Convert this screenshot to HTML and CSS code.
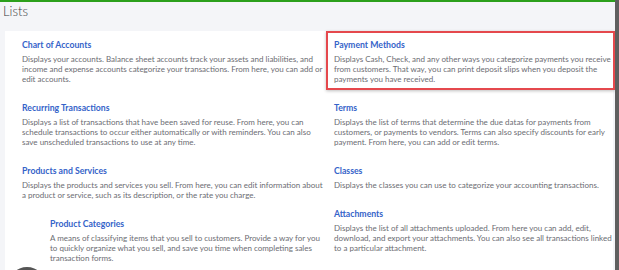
FILE: index.html
```
<!DOCTYPE html>
<html>
  <head>
    <title>Lists</title>
    <link rel="stylesheet" href="styles.css">
  </head>
  <body>
    <div class="window">
      <div class="page">
        <h1 class="page-title">Lists</h1>
        <div class="lists-card">
          <div class="list-column left-column">
            <div class="list-item">
              <a class="item-title" href="#">Chart of Accounts</a>
              <p class="item-text">Displays your accounts. Balance sheet accounts track your assets and liabilities, and income and expense accounts categorize your transactions. From here, you can add or edit accounts.</p>
            </div>
            <div class="list-item">
              <a class="item-title" href="#">Recurring Transactions</a>
              <p class="item-text">Displays a list of transactions that have been saved for reuse. From here, you can schedule transactions to occur either automatically or with reminders. You can also save unscheduled transactions to use at any time.</p>
            </div>
            <div class="list-item">
              <a class="item-title" href="#">Products and Services</a>
              <p class="item-text">Displays the products and services you sell. From here, you can edit information about a product or service, such as its description, or the rate you charge.</p>
            </div>
            <div class="list-item sub-item">
              <a class="item-title" href="#">Product Categories</a>
              <p class="item-text">A means of classifying items that you sell to customers. Provide a way for you to quickly organize what you sell, and save you time when completing sales transaction forms.</p>
            </div>
          </div>
          <div class="list-column right-column">
            <div class="list-item highlighted">
              <a class="item-title" href="#">Payment Methods</a>
              <p class="item-text">Displays Cash, Check, and any other ways you categorize payments you receive from customers. That way, you can print deposit slips when you deposit the payments you have received.</p>
            </div>
            <div class="list-item">
              <a class="item-title" href="#">Terms</a>
              <p class="item-text">Displays the list of terms that determine the due datas for payments from customers, or payments to vendors. Terms can also specify discounts for early payment. From here, you can add or edit terms.</p>
            </div>
            <div class="list-item">
              <a class="item-title" href="#">Classes</a>
              <p class="item-text">Displays the classes you can use to categorize your accounting transactions.</p>
            </div>
            <div class="list-item">
              <a class="item-title" href="#">Attachments</a>
              <p class="item-text">Displays the list of all attachments uploaded. From here you can add, edit, download, and export your attachments. You can also see all transactions linked to a particular attachment.</p>
            </div>
          </div>
        </div>
        <div class="help-button"></div>
      </div>
      <div class="scrollbar"></div>
    </div>
  </body>
</html>
```

FILE: styles.css
```
body {
  margin: 0;
  background-color: #f4f5f8;
  font-family: "Lato", "Liberation Sans", sans-serif;
  overflow: hidden;
}

.window {
  display: flex;
  height: 270px;
}

.page {
  position: relative;
  flex: 1;
  border-top: 2px solid #2ca01c;
  overflow: hidden;
}

.scrollbar {
  width: 4px;
  background-color: #5f5f5f;
}

.page-title {
  margin: 0;
  padding: 1px 0 0 3px;
  height: 28px;
  box-sizing: border-box;
  font-size: 13px;
  font-weight: 300;
  color: #393a3d;
}

.lists-card {
  display: grid;
  grid-template-columns: 321px 1fr;
  margin: 1px 2px 0 5px;
  background-color: white;
  height: 260px;
}

.left-column {
  padding: 0 1px 0 9px;
}

.right-column {
  margin-right: -2px;
}

.list-item {
  padding: 6px 0 4px 6px;
  margin-bottom: 4px;
  border: 2px solid transparent;
}

.list-item.highlighted {
  border-color: #e5484d;
  box-shadow: 0 1px 3px rgba(0, 0, 0, 0.25);
}

.sub-item {
  margin-left: 28px;
  margin-top: 2px;
}

.item-title {
  display: block;
  font-size: 8.7px;
  line-height: 12px;
  font-weight: bold;
  color: #3563c9;
  text-decoration: none;
}

.item-text {
  margin: 3px 0 0;
  font-size: 8px;
  line-height: 10px;
  color: #6b6c72;
}

.help-button {
  position: absolute;
  left: 8px;
  top: 265px;
  width: 38px;
  height: 38px;
  border-radius: 50%;
  background-color: #555555;
}
```
